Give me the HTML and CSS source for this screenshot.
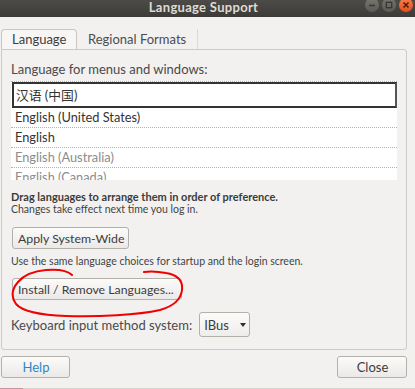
FILE: index.html
```html
<!DOCTYPE html>
<html>
<head>
    <title>Language Support</title>
    <link rel="stylesheet" href="styles.css">
</head>
<body>
    <div class="titlebar">
        <span class="title">Language Support</span>
        <div class="wm-buttons">
            <span class="wm-btn"><svg width="14" height="14" viewBox="0 0 14 14"><path d="M4 7.5h6" stroke="#3a3935" stroke-width="1.6"/></svg></span>
            <span class="wm-btn"><svg width="14" height="14" viewBox="0 0 14 14"><rect x="4.3" y="4.3" width="5.4" height="5.4" fill="none" stroke="#3a3935" stroke-width="1.4"/></svg></span>
            <span class="wm-btn close"><svg width="14" height="14" viewBox="0 0 14 14"><path d="M4.5 4.5l5 5M9.5 4.5l-5 5" stroke="#5a1a06" stroke-width="1.6"/></svg></span>
        </div>
    </div>

    <div class="dialog">
        <div class="tabs">
            <div class="tab active">Language</div>
            <div class="tab">Regional Formats</div>
        </div>

        <div class="notebook">
            <p class="caption">Language for menus and windows:</p>
            <div class="lang-list">
                <div class="lang-row selected">汉语 (中国)</div>
                <div class="lang-row">English (United States)</div>
                <div class="lang-row">English</div>
                <div class="lang-row muted">English (Australia)</div>
                <div class="lang-row muted">English (Canada)</div>
            </div>

            <p class="hint strong">Drag languages to arrange them in order of preference.</p>
            <p class="hint">Changes take effect next time you log in.</p>

            <button class="btn apply">Apply System-Wide</button>
            <p class="hint spaced">Use the same language choices for startup and the login screen.</p>

            <div class="install-wrap">
                <button class="btn install">Install / Remove Languages...</button>
                <!-- red marker scribble round the button -->
                <svg class="scribble" width="190" height="56" viewBox="0 0 190 56">
                    <path d="M64 10 C60 6, 50 4, 38 5 C26 6, 16 10, 10 17 C4 24, 3 32, 8 39 C14 46, 30 50, 58 51 C90 52, 130 50, 152 45 C166 41, 173 34, 174 25 C175 16, 170 10, 158 8 C148 6, 142 6, 136 7"
                          fill="none" stroke="#f00000" stroke-width="2" stroke-linecap="round"/>
                </svg>
            </div>

            <div class="im-row">
                <span>Keyboard input method system:</span>
                <div class="combo">IBus <span class="arrow"></span></div>
            </div>
        </div>

        <div class="actions">
            <button class="btn help">Help</button>
            <button class="btn close-btn">Close</button>
        </div>
    </div>
    <div class="bottom-edge"><span></span></div>
</body>
</html>
```

FILE: styles.css
```css
body {
    font-family: Lato, "Noto Sans CJK SC", sans-serif;
    font-size: 13px;
    color: #3c3c3c;
    background-color: #f2f1f0;
    margin: 0;
    padding: 0;
    width: 415px;
    height: 389px;
    overflow: hidden;
    position: relative;
}

p {
    margin: 0;
}

/* window title bar */
.titlebar {
    height: 17px;
    background: linear-gradient(#4c4b47, #3c3b37);
    display: flex;
    justify-content: center;
    position: relative;
    overflow: hidden;
    padding-right: 8px;
}

.title {
    color: #dfdbd2;
    font-weight: bold;
    font-size: 13px;
    line-height: 14px;
    letter-spacing: 0.3px;
}

.wm-buttons {
    position: absolute;
    right: 2px;
    top: -2px;
    display: flex;
    gap: 3px;
}

.wm-btn {
    width: 14px;
    height: 14px;
    border-radius: 50%;
    background: linear-gradient(#77766f, #5b5a55);
    display: block;
}

.wm-btn svg {
    display: block;
}

.wm-btn.close {
    background: linear-gradient(#f77d4c, #e2501c);
}

/* dialog */
.dialog {
    padding: 12px 0 0 1px;
}

.tabs {
    display: flex;
    height: 20px;
}

.tab {
    padding: 0 11px;
    line-height: 20px;
    color: #4c4c4c;
    box-sizing: border-box;
    height: 20px;
}

.tab.active {
    background-color: #f7f6f5;
    border: 1px solid #c9c6c1;
    border-bottom: none;
    border-radius: 4px 4px 0 0;
    padding: 0 10px;
    line-height: 19px;
    color: #3c3c3c;
    width: 76px;
}

.tab + .tab {
    border-right: 1px solid #dcd9d5;
    padding-right: 11px;
}

.notebook {
    width: 406px;
    height: 301px;
    box-sizing: border-box;
    border: 1px solid #cdcac5;
    border-radius: 0 3px 3px 3px;
    padding: 11px 9px 0 9px;
}

.caption {
    line-height: 16px;
    color: #4a4a4a;
}

.lang-list {
    margin-top: 4px;
    height: 98px;
    overflow: hidden;
    background-color: #fff;
    border-top: 1px dotted #eb9f80;
}

.lang-row {
    height: 19px;
    line-height: 19px;
    padding-left: 4px;
    border-bottom: 1px dotted #eb9f80;
    color: #333;
    font-size: 12.8px;
}

.lang-row.selected {
    height: 26px;
    line-height: 23px;
    box-sizing: border-box;
    border: 2px solid #333;
    border-right-color: #555;
    padding-left: 2px;
    margin-left: 1px;
}

.lang-row.muted {
    color: #8c8c8c;
}

.hint {
    font-size: 10.5px;
    line-height: 12px;
    color: #444;
}

.hint.strong {
    font-size: 11px;
    font-weight: bold;
    margin-top: 11px;
    color: #3c3c3c;
}

.hint.spaced {
    margin-top: 6px;
}

/* buttons */
.btn {
    font-family: Lato, sans-serif;
    font-size: 12.3px;
    color: #3c3c3c;
    background: linear-gradient(#fbfbfa, #ebe9e7);
    border: 1px solid #b3b0aa;
    border-radius: 3px;
    height: 22px;
    padding: 0 4px 0 5px;
    display: block;
    white-space: nowrap;
    cursor: pointer;
}

.btn.apply {
    margin-top: 12px;
    margin-left: 1px;
}

.install-wrap {
    position: relative;
    margin-top: 11px;
}

.btn.install {
    margin-left: 1px;
    padding: 0 7px 0 5px;
}

.scribble {
    position: absolute;
    left: -3px;
    top: -13px;
    pointer-events: none;
}

.im-row {
    margin-top: 12px;
    display: flex;
    align-items: center;
    gap: 7px;
    color: #4a4a4a;
}

.combo {
    height: 25px;
    width: 51px;
    box-sizing: border-box;
    border: 1px solid #b3b0aa;
    border-radius: 3px;
    background: linear-gradient(#fbfbfa, #efedeb);
    display: flex;
    align-items: center;
    padding-left: 4px;
    gap: 11px;
    color: #3c3c3c;
}

.arrow {
    width: 0;
    height: 0;
    border-left: 3.5px solid transparent;
    border-right: 3.5px solid transparent;
    border-top: 4px solid #2e2e2e;
}

.actions {
    width: 406px;
    display: flex;
    justify-content: space-between;
    margin-top: 6px;
}

.btn.help {
    width: 69px;
    font-size: 13px;
    color: #2f87c6;
}

.btn.close-btn {
    width: 70px;
    font-size: 13px;
}

.bottom-edge {
    position: absolute;
    left: 0;
    right: 0;
    bottom: 0;
    height: 1px;
    background-color: #d6d4d0;
}

.bottom-edge span {
    display: block;
    width: 23px;
    height: 1px;
    background-color: #c595a4;
}
```
